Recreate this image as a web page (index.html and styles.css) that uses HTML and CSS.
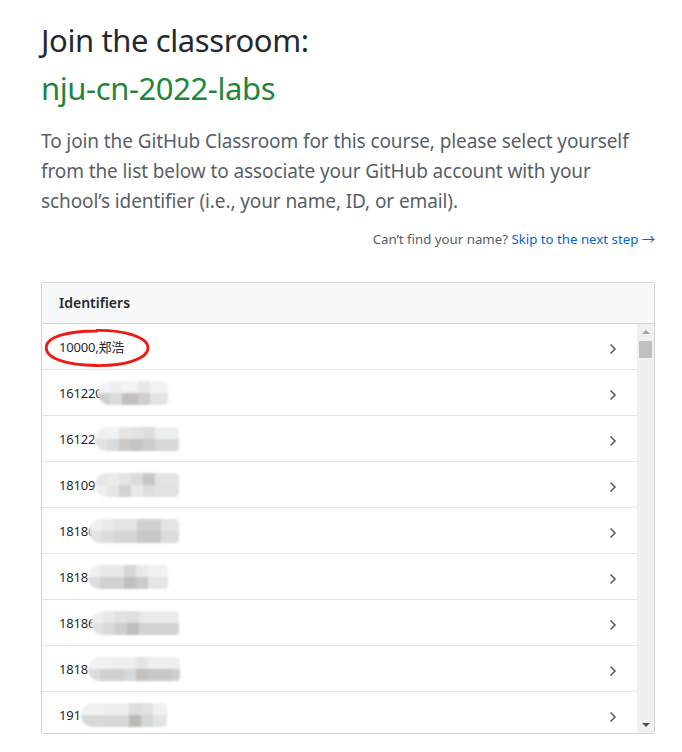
FILE: index.html
```html
<!DOCTYPE html>
<html lang="en">
<head>
<meta charset="utf-8">
<title>Join the classroom</title>
<link rel="stylesheet" href="styles.css">
</head>
<body>
<main class="page">
  <h1 class="title">Join the classroom:<br><span class="org">nju-cn-2022-labs</span></h1>
  <p class="lead">To join the GitHub Classroom for this course, please select yourself from the list below to associate your GitHub account with your school’s identifier (i.e., your name, ID, or email).</p>
  <p class="skip">Can’t find your name? <a href="#" class="skip-link">Skip to the next step →</a></p>

  <section class="box">
    <div class="box-header">Identifiers</div>
    <div class="box-body">
      <ul class="rows">
        <li class="row row-marked"><span class="ident">10000,郑浩</span><svg class="chev" viewBox="0 0 8 12" width="8" height="12"><path d="M1.5 1.5 L6 6 L1.5 10.5" fill="none" stroke="#586069" stroke-width="1.6"/></svg>
          <svg class="ring" viewBox="0 0 106 40" width="106" height="40"><path d="M52 2.5 C80 2 104 9 104 20 C104 31 80 38 52 37.5 C24 37 2 31 2.2 19.5 C2.5 8 26 2.8 54 3" fill="none" stroke="#ec1c14" stroke-width="2.8"/></svg>
        </li>
        <li class="row"><span class="ident">161220<span class="mosaic m-a"></span></span><svg class="chev" viewBox="0 0 8 12" width="8" height="12"><path d="M1.5 1.5 L6 6 L1.5 10.5" fill="none" stroke="#586069" stroke-width="1.6"/></svg></li>
        <li class="row"><span class="ident">16122<span class="mosaic m-b"></span></span><svg class="chev" viewBox="0 0 8 12" width="8" height="12"><path d="M1.5 1.5 L6 6 L1.5 10.5" fill="none" stroke="#586069" stroke-width="1.6"/></svg></li>
        <li class="row"><span class="ident">18109<span class="mosaic m-c"></span></span><svg class="chev" viewBox="0 0 8 12" width="8" height="12"><path d="M1.5 1.5 L6 6 L1.5 10.5" fill="none" stroke="#586069" stroke-width="1.6"/></svg></li>
        <li class="row"><span class="ident">18186<span class="mosaic m-d"></span></span><svg class="chev" viewBox="0 0 8 12" width="8" height="12"><path d="M1.5 1.5 L6 6 L1.5 10.5" fill="none" stroke="#586069" stroke-width="1.6"/></svg></li>
        <li class="row"><span class="ident">1818<span class="mosaic m-e"></span></span><svg class="chev" viewBox="0 0 8 12" width="8" height="12"><path d="M1.5 1.5 L6 6 L1.5 10.5" fill="none" stroke="#586069" stroke-width="1.6"/></svg></li>
        <li class="row"><span class="ident">18186<span class="mosaic m-f"></span></span><svg class="chev" viewBox="0 0 8 12" width="8" height="12"><path d="M1.5 1.5 L6 6 L1.5 10.5" fill="none" stroke="#586069" stroke-width="1.6"/></svg></li>
        <li class="row"><span class="ident">1818<span class="mosaic m-g"></span></span><svg class="chev" viewBox="0 0 8 12" width="8" height="12"><path d="M1.5 1.5 L6 6 L1.5 10.5" fill="none" stroke="#586069" stroke-width="1.6"/></svg></li>
        <li class="row row-last"><span class="ident">191<span class="mosaic m-h"></span></span><svg class="chev" viewBox="0 0 8 12" width="8" height="12"><path d="M1.5 1.5 L6 6 L1.5 10.5" fill="none" stroke="#586069" stroke-width="1.6"/></svg></li>
      </ul>
      <div class="scrollbar">
        <span class="sb-arrow sb-up"></span>
        <span class="sb-thumb"></span>
        <span class="sb-track"></span>
        <span class="sb-arrow sb-down"></span>
      </div>
    </div>
  </section>
</main>
</body>
</html>
```

FILE: styles.css
```css
html, body {
  margin: 0;
  padding: 0;
  background: #ffffff;
}

body {
  font-family: "Noto Sans", "Open Sans", "Noto Sans CJK SC", sans-serif;
  color: #24292e;
}

.page {
  width: 614px;
  padding: 16px 0 0 41px;
}

.title {
  margin: 0;
  font-size: 31px;
  font-weight: 400;
  line-height: 48px;
  color: #24292e;
  letter-spacing: -0.4px;
}

.org {
  color: #22863a;
}

.lead {
  margin: 14px 0 0 0;
  font-size: 19px;
  line-height: 30px;
  color: #586069;
  letter-spacing: -0.1px;
}

.skip {
  margin: 13px 0 0 0;
  text-align: right;
  font-size: 13.25px;
  line-height: 20px;
  color: #586069;
}

.skip-link {
  color: #0366d6;
  text-decoration: none;
}

.box {
  margin-top: 33px;
  border: 1px solid #d1d5da;
  border-radius: 2px;
}

.box-header {
  height: 40px;
  line-height: 40px;
  padding-left: 17px;
  background: #f6f8fa;
  border-bottom: 1px solid #d1d5da;
  font-size: 14px;
  font-weight: 600;
  color: #24292e;
}

.box-body {
  display: flex;
  height: 409px;
  overflow: hidden;
}

.rows {
  flex: 1;
  list-style: none;
  margin: 0;
  padding: 0;
}

.row {
  position: relative;
  display: flex;
  align-items: center;
  justify-content: space-between;
  height: 45px;
  padding: 0 20px 0 17px;
  border-bottom: 1px solid #e1e4e8;
  font-size: 13px;
  color: #24292e;
}

.row-last {
  border-bottom: none;
}

.ident {
  display: flex;
  align-items: center;
  letter-spacing: -0.2px;
  font-family: "Noto Sans", "Noto Sans CJK SC", sans-serif;
}

.chev {
  margin-top: 4px;
}

.ring {
  position: absolute;
  left: 2px;
  top: 4px;
}

.mosaic {
  display: inline-block;
  height: 24px;
  border-radius: 12px 4px 4px 12px;
  filter: blur(1.2px);
}

.m-a { width: 70px; margin-left: -4px;
  background:
    linear-gradient(90deg, #f1f3f5 0 12px, #eef0f2 12px 24px, #f3f4f5 24px 40px, #e6e7e9 40px 52px, #f3f3f4 52px 70px) top / 100% 50% no-repeat,
    linear-gradient(90deg, #cfd0cc 0 12px, #d9dcde 12px 24px, #c3bfc0 24px 40px, #cfcdcf 40px 52px, #e3e4e8 52px 70px) bottom / 100% 50% no-repeat; }
.m-b { width: 84px; margin-left: 0;
  background:
    linear-gradient(90deg, #eef0f2 0 12px, #f1f2f3 12px 24px, #e6e4e4 24px 36px, #e4e3e4 36px 48px, #dedde0 48px 60px, #eceff1 60px 84px) top / 100% 50% no-repeat,
    linear-gradient(90deg, #e0e2e2 0 12px, #d8dbdd 12px 24px, #cdc8c6 24px 36px, #c6c3c5 36px 48px, #cecbce 48px 60px, #d7d7da 60px 84px) bottom / 100% 50% no-repeat; }
.m-c { width: 84px; margin-left: 0;
  background:
    linear-gradient(90deg, #e6e6e7 0 12px, #eaebec 12px 24px, #e3e4e5 24px 36px, #dcdcdd 36px 48px, #c6c6c6 48px 60px, #e4e4e5 60px 84px) top / 100% 50% no-repeat,
    linear-gradient(90deg, #eeeeef 0 12px, #e5e6e7 12px 24px, #d1d3d0 24px 36px, #e8e9ea 36px 48px, #dcdddd 48px 60px, #e1e1e3 60px 84px) bottom / 100% 50% no-repeat; }
.m-d { width: 90px; margin-left: -6px;
  background:
    linear-gradient(90deg, #eeeff0 0 12px, #e9eaeb 12px 24px, #e3e4e5 24px 48px, #cfcfd1 48px 72px, #e4e4e6 72px 90px) top / 100% 50% no-repeat,
    linear-gradient(90deg, #e2e3e4 0 12px, #dcdde0 12px 24px, #d5d6d8 24px 48px, #c8c8cb 48px 72px, #dcdce0 72px 90px) bottom / 100% 50% no-repeat; }
.m-e { width: 80px; margin-left: 0;
  background:
    linear-gradient(90deg, #eeeff0 0 12px, #e6e7e8 12px 36px, #d8d6d6 36px 48px, #e9e9ea 48px 60px, #f1f1f2 60px 80px) top / 100% 50% no-repeat,
    linear-gradient(90deg, #dcdddd 0 12px, #d0d0d1 12px 36px, #c2c0bf 36px 48px, #cbcbcc 48px 60px, #e6e6e8 60px 80px) bottom / 100% 50% no-repeat; }
.m-f { width: 88px; margin-left: -4px;
  background:
    linear-gradient(90deg, #eeeff0 0 12px, #e7e8e9 12px 24px, #e1e2e3 24px 36px, #dfdfe1 36px 48px, #eaeaeb 48px 88px) top / 100% 50% no-repeat,
    linear-gradient(90deg, #e0e1e2 0 12px, #d8d9da 12px 24px, #cdcdcc 24px 36px, #bebcbd 36px 48px, #d2d2d4 48px 88px) bottom / 100% 50% no-repeat; }
.m-g { width: 92px; margin-left: 0;
  background:
    linear-gradient(90deg, #f1f2f3 0 24px, #eeeff0 24px 48px, #e4e5e6 48px 60px, #eeeff0 60px 92px) top / 100% 50% no-repeat,
    linear-gradient(90deg, #dcdcdc 0 12px, #cfd0cf 12px 36px, #d7d8db 36px 48px, #c3c0bd 48px 60px, #c7c6c9 60px 84px, #cfd0d3 84px 92px) bottom / 100% 50% no-repeat; }
.m-h { width: 86px; margin-left: 0;
  background:
    linear-gradient(90deg, #f0f1f2 0 24px, #eeeff0 24px 48px, #dfdddd 48px 60px, #e2e2e3 60px 72px, #eff0f1 72px 86px) top / 100% 50% no-repeat,
    linear-gradient(90deg, #d8d8d9 0 24px, #d6d7d7 24px 48px, #bdbab6 48px 60px, #d3d8da 60px 72px, #e3e4e6 72px 86px) bottom / 100% 50% no-repeat; }

.scrollbar {
  width: 17px;
  display: flex;
  flex-direction: column;
  align-items: center;
  background: #f0f0f0;
}

.sb-arrow {
  width: 0;
  height: 0;
  border-left: 4px solid transparent;
  border-right: 4px solid transparent;
}

.sb-up {
  margin-top: 6px;
  border-bottom: 4px solid #a3a3a3;
}

.sb-down {
  margin-bottom: 6px;
  border-top: 4px solid #505050;
}

.sb-thumb {
  margin-top: 7px;
  width: 13px;
  height: 17px;
  background: #c1c1c1;
}

.sb-track {
  flex: 1;
}
```
